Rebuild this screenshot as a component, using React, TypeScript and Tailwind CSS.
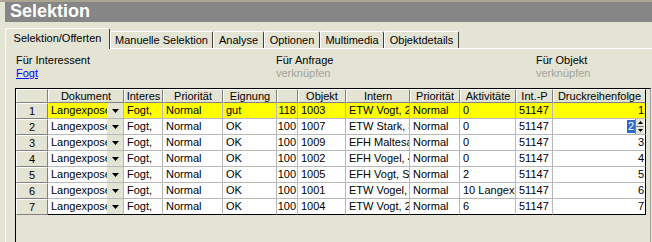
import React from 'react';

const W = [32, 76, 39, 60, 54, 21, 48, 64, 50, 56, 37, 93];
const HEAD = ['', 'Dokument', 'Interes', 'Priorität', 'Eignung', '', 'Objekt', 'Intern', 'Priorität', 'Aktivitäte', 'Int.-P', 'Druckreihenfolge'];

const ROWS = [
  ['Fogt,', 'Normal', 'gut', '118', '1003', 'ETW Vogt, 2-Zi', 'Normal', '0', '51147', '1'],
  ['Fogt,', 'Normal', 'OK', '100', '1007', 'ETW Stark, 3-Zi', 'Normal', '0', '51147', '2'],
  ['Fogt,', 'Normal', 'OK', '100', '1009', 'EFH Maltesach', 'Normal', '0', '51147', '3'],
  ['Fogt,', 'Normal', 'OK', '100', '1002', 'EFH Vogel, 4-Zi', 'Normal', '0', '51147', '4'],
  ['Fogt,', 'Normal', 'OK', '100', '1005', 'EFH Vogt, Seestr', 'Normal', '2', '51147', '5'],
  ['Fogt,', 'Normal', 'OK', '100', '1001', 'ETW Vogel,  3-Zi', 'Normal', '10 Langexposé', '51147', '6'],
  ['Fogt,', 'Normal', 'OK', '100', '1004', 'ETW Vogt, 2-Zi', 'Normal', '6', '51147', '7'],
];

const TABS = [
  { label: 'Selektion/Offerten', w: 105 },
  { label: 'Manuelle Selektion', w: 103 },
  { label: 'Analyse', w: 51 },
  { label: 'Optionen', w: 56 },
  { label: 'Multimedia', w: 64 },
  { label: 'Objektdetails', w: 75 },
];

function DropArrow() {
  return (
    <svg width="7" height="4" viewBox="0 0 7 4">
      <polygon points="0,0 7,0 3.5,4" fill="#000" />
    </svg>
  );
}

function Spin() {
  return (
    <div className="w-[9px] h-full flex flex-col bg-[#e4e4d4] border-l border-[#808080]">
      <div className="flex-1 flex items-center justify-center border-b border-[#808080]">
        <svg width="5" height="3" viewBox="0 0 5 3"><polygon points="2.5,0 5,3 0,3" fill="#000" /></svg>
      </div>
      <div className="flex-1 flex items-center justify-center">
        <svg width="5" height="3" viewBox="0 0 5 3"><polygon points="0,0 5,0 2.5,3" fill="#000" /></svg>
      </div>
    </div>
  );
}

export default function App() {
  return (
    <div className="w-[652px] h-[242px] overflow-hidden bg-[#e4e4d4] border-t-2 border-[#aba68f] flex flex-col text-black font-['Liberation_Sans',Arial,sans-serif]">
      <div className="ml-[5px] h-[20px] shrink-0 bg-[#868686] pl-[5px] text-[18px] leading-[18px] font-bold text-white">
        Selektion
      </div>

      <div className="mt-[6px] ml-[5px] h-[20px] shrink-0 flex items-end relative z-10">
        {TABS.map((t, i) => (
          <div
            key={t.label}
            style={{ width: t.w }}
            className={`flex items-center justify-center text-[11px] leading-[13px] border-t border-l border-white border-r border-r-[#404040] rounded-t-[2px] bg-[#e4e4d4] ${
              i === 0 ? 'h-[21px] -mb-px pb-[2px]' : 'h-[17px] pt-px'
            }`}
          >
            {t.label}
          </div>
        ))}
      </div>

      <div className="flex-1 ml-[5px] border-l border-t border-white flex flex-col min-h-0">
        <div className="pt-[5px] pl-[10px] flex text-[11px] leading-[13px]">
          <div className="w-[260px]">
            <div>Für Interessent</div>
            <div className="text-[#0000ff] underline">Fogt</div>
          </div>
          <div className="w-[260px]">
            <div>Für Anfrage</div>
            <div className="text-[#a3a39a]">verknüpfen</div>
          </div>
          <div>
            <div>Für Objekt</div>
            <div className="text-[#a3a39a]">verknüpfen</div>
          </div>
        </div>

        <div className="mt-[8px] ml-[9px] w-[636px] flex-1 border-l border-t border-black border-r border-r-[#a0a0a0] text-[11px]">
          <div className="flex h-[14px]">
            {HEAD.map((h, i) => (
              <div
                key={i}
                style={{ width: W[i] }}
                className={`h-full overflow-hidden whitespace-nowrap text-center leading-[12px] bg-[#e4e4d4] border-t border-l border-white border-b border-b-[#808080] ${
                  i === HEAD.length - 1 ? 'border-r border-r-black' : 'border-r border-r-[#808080]'
                }`}
              >
                {h}
              </div>
            ))}
          </div>

          {ROWS.map((r, ri) => {
            const yellow = ri === 0;
            const last = ri === ROWS.length - 1;
            const bg = yellow ? 'bg-[#ffff00]' : 'bg-white';
            const bb = last ? 'border-b-black' : 'border-b-[#b8b8b8]';
            return (
              <div key={ri} className="flex h-[16px]">
                <div
                  style={{ width: W[0] }}
                  className="h-full text-center leading-[14px] bg-[#e4e4d4] border-t border-l border-white border-r border-r-[#808080] border-b border-b-[#808080]"
                >
                  {ri + 1}
                </div>
                <div style={{ width: W[1] }} className={`h-full flex border-r border-r-[#b8b8b8] border-b ${bb} ${bg}`}>
                  <div className="w-[59px] overflow-hidden whitespace-nowrap pl-[3px] leading-[15px]">Langexposé</div>
                  <div className="flex-1 bg-[#e4e4d4] flex items-center justify-center">
                    <DropArrow />
                  </div>
                </div>
                {r.map((c, ci) => {
                  const col = ci + 2;
                  const isLast = col === W.length - 1;
                  const right = col === 5 || isLast;
                  return (
                    <div
                      key={ci}
                      style={{ width: W[col] }}
                      className={`h-full overflow-hidden whitespace-nowrap leading-[15px] border-b ${bb} ${bg} ${
                        isLast ? 'border-r border-r-black' : 'border-r border-r-[#b8b8b8]'
                      } ${right ? 'text-right pr-px' : 'pl-[3px]'}`}
                    >
                      {isLast && ri === 1 ? (
                        <div className="flex h-full justify-end items-stretch">
                          <span className="self-center h-[13px] leading-[13px] px-px bg-[#316ac5] text-white">2</span>
                          <Spin />
                        </div>
                      ) : (
                        c
                      )}
                    </div>
                  );
                })}
              </div>
            );
          })}
        </div>
      </div>
    </div>
  );
}
